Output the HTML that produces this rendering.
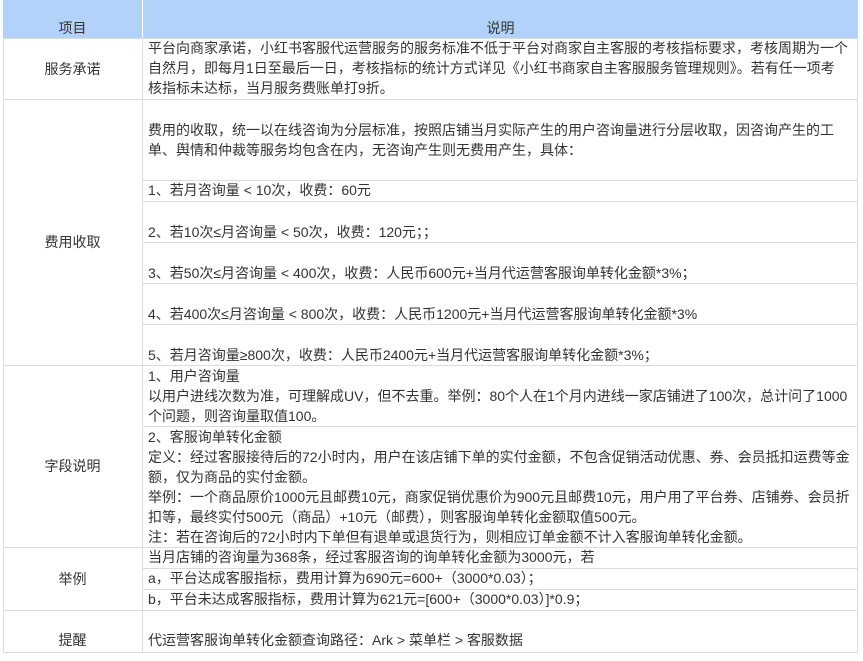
<!DOCTYPE html>
<html><head><meta charset="utf-8"><style>
body{margin:0;width:863px;height:661px;background:#fff;position:relative;overflow:hidden;font-family:"Liberation Sans","Noto Sans CJK SC",sans-serif;font-size:14px;color:#333}
.h{position:absolute;height:1px;background:#dcdcdc}
.v{position:absolute;width:1px;background:#dcdcdc}
.t{position:absolute;left:148px;line-height:20px;white-space:nowrap}
.l{position:absolute;left:3px;width:139px;text-align:center;line-height:20px}
</style></head><body>
<div style="position:absolute;left:3px;top:0;width:855px;height:38px;background:#b3d2fa"></div>
<div class="v" style="left:142px;top:0;height:38px;background:#fff"></div>
<div class="l" style="top:18px">项目</div>
<div style="position:absolute;left:143px;width:715px;top:18px;text-align:center;line-height:20px">说明</div>

<div class="v" style="left:3px;top:38px;height:614px"></div>
<div class="v" style="left:142px;top:38px;height:614px"></div>
<div class="v" style="left:857px;top:38px;height:614px"></div>
<div class="h" style="left:3px;width:855px;top:38px"></div>
<div class="h" style="left:3px;width:855px;top:99px"></div>
<div class="h" style="left:142px;width:716px;top:180px"></div>
<div class="h" style="left:142px;width:716px;top:201px"></div>
<div class="h" style="left:142px;width:716px;top:242px"></div>
<div class="h" style="left:142px;width:716px;top:283px"></div>
<div class="h" style="left:142px;width:716px;top:324px"></div>
<div class="h" style="left:3px;width:855px;top:365px"></div>
<div class="h" style="left:142px;width:716px;top:426px"></div>
<div class="h" style="left:3px;width:855px;top:547px"></div>
<div class="h" style="left:142px;width:716px;top:568px"></div>
<div class="h" style="left:142px;width:716px;top:589px"></div>
<div class="h" style="left:3px;width:855px;top:610px"></div>
<div class="h" style="left:3px;width:855px;top:652px"></div>

<div class="l" style="top:59px">服务承诺</div>
<div class="t" style="top:38px">平台向商家承诺，小红书客服代运营服务的服务标准不低于平台对商家自主客服的考核指标要求，考核周期为一个</div>
<div class="t" style="top:58px">自然月，即每月1日至最后一日，考核指标的统计方式详见《小红书商家自主客服服务管理规则》。若有任一项考</div>
<div class="t" style="top:78px">核指标未达标，当月服务费账单打9折。</div>

<div class="l" style="top:232px">费用收取</div>
<div class="t" style="top:120px">费用的收取，统一以在线咨询为分层标准，按照店铺当月实际产生的用户咨询量进行分层收取，因咨询产生的工</div>
<div class="t" style="top:140px">单、舆情和仲裁等服务均包含在内，无咨询产生则无费用产生，具体：</div>
<div class="t" style="top:180px">1、若月咨询量 &lt; 10次，收费：60元</div>
<div class="t" style="top:222px">2、若10次≤月咨询量 &lt; 50次，收费：120元；；</div>
<div class="t" style="top:263px">3、若50次≤月咨询量 &lt; 400次，收费：人民币600元+当月代运营客服询单转化金额*3%；</div>
<div class="t" style="top:304px">4、若400次≤月咨询量 &lt; 800次，收费：人民币1200元+当月代运营客服询单转化金额*3%</div>
<div class="t" style="top:345px">5、若月咨询量≥800次，收费：人民币2400元+当月代运营客服询单转化金额*3%；</div>

<div class="l" style="top:456px">字段说明</div>
<div class="t" style="top:366px">1、用户咨询量</div>
<div class="t" style="top:386px">以用户进线次数为准，可理解成UV，但不去重。举例：80个人在1个月内进线一家店铺进了100次，总计问了1000</div>
<div class="t" style="top:406px">个问题，则咨询量取值100。</div>
<div class="t" style="top:427px">2、客服询单转化金额</div>
<div class="t" style="top:447px">定义：经过客服接待后的72小时内，用户在该店铺下单的实付金额，不包含促销活动优惠、券、会员抵扣运费等金</div>
<div class="t" style="top:467px">额，仅为商品的实付金额。</div>
<div class="t" style="top:487px">举例：一个商品原价1000元且邮费10元，商家促销优惠价为900元且邮费10元，用户用了平台券、店铺券、会员折</div>
<div class="t" style="top:507px">扣等，最终实付500元（商品）+10元（邮费），则客服询单转化金额取值500元。</div>
<div class="t" style="top:527px">注：若在咨询后的72小时内下单但有退单或退货行为，则相应订单金额不计入客服询单转化金额。</div>

<div class="l" style="top:569px">举例</div>
<div class="t" style="top:547px">当月店铺的咨询量为368条，经过客服咨询的询单转化金额为3000元，若</div>
<div class="t" style="top:568px">a，平台达成客服指标，费用计算为690元=600+（3000*0.03）；</div>
<div class="t" style="top:589px">b，平台未达成客服指标，费用计算为621元=[600+（3000*0.03）]*0.9；</div>

<div class="l" style="top:630px">提醒</div>
<div class="t" style="top:630px">代运营客服询单转化金额查询路径：Ark &gt; 菜单栏 &gt; 客服数据</div>
</body></html>
